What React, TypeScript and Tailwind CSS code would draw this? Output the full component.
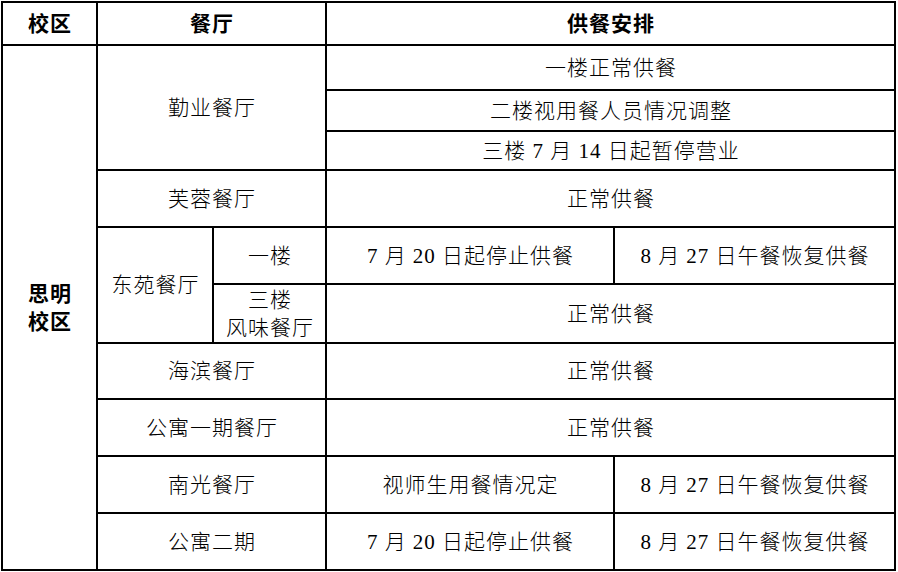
import React from "react";

const font = {
  fontFamily: '"Liberation Serif", "Noto Sans CJK SC", serif',
};

function Cell({
  className = "",
  children,
}: {
  className?: string;
  children: React.ReactNode;
}) {
  return (
    <div
      className={`bg-white flex items-center justify-center text-center text-[21px] tracking-[1px] pl-px leading-[28px] text-black font-light ${className}`}
    >
      {children}
    </div>
  );
}

export default function App() {
  return (
    <div className="w-[898px] h-[572px] bg-white" style={font}>
      <div
        className="ml-px mt-px inline-grid bg-black p-[2px] gap-[2px] grid-cols-[93px_114px_111px_286px_279px] grid-rows-[41px_43px_39px_37px_55px_55px_57px_54px_55px_55px_55px]"
      >
        {/* header */}
        <Cell className="col-start-1 row-start-1 !font-bold">校区</Cell>
        <Cell className="col-start-2 col-span-2 row-start-1 !font-bold">餐厅</Cell>
        <Cell className="col-start-4 col-span-2 row-start-1 !font-bold">供餐安排</Cell>

        {/* campus */}
        <Cell className="col-start-1 row-start-2 row-span-10 !font-bold">
          思明
          <br />
          校区
        </Cell>

        {/* 勤业 */}
        <Cell className="col-start-2 col-span-2 row-start-2 row-span-3">勤业餐厅</Cell>
        <Cell className="col-start-4 col-span-2 row-start-2">一楼正常供餐</Cell>
        <Cell className="col-start-4 col-span-2 row-start-3">二楼视用餐人员情况调整</Cell>
        <Cell className="col-start-4 col-span-2 row-start-4">三楼 7 月 14 日起暂停营业</Cell>

        {/* 芙蓉 */}
        <Cell className="col-start-2 col-span-2 row-start-5">芙蓉餐厅</Cell>
        <Cell className="col-start-4 col-span-2 row-start-5">正常供餐</Cell>

        {/* 东苑 */}
        <Cell className="col-start-2 row-start-6 row-span-2">东苑餐厅</Cell>
        <Cell className="col-start-3 row-start-6">一楼</Cell>
        <Cell className="col-start-4 row-start-6">7 月 20 日起停止供餐</Cell>
        <Cell className="col-start-5 row-start-6">8 月 27 日午餐恢复供餐</Cell>
        <Cell className="col-start-3 row-start-7">
          三楼
          <br />
          风味餐厅
        </Cell>
        <Cell className="col-start-4 col-span-2 row-start-7">正常供餐</Cell>

        {/* 海滨 */}
        <Cell className="col-start-2 col-span-2 row-start-8">海滨餐厅</Cell>
        <Cell className="col-start-4 col-span-2 row-start-8">正常供餐</Cell>

        {/* 公寓一期 */}
        <Cell className="col-start-2 col-span-2 row-start-9">公寓一期餐厅</Cell>
        <Cell className="col-start-4 col-span-2 row-start-9">正常供餐</Cell>

        {/* 南光 */}
        <Cell className="col-start-2 col-span-2 row-start-10">南光餐厅</Cell>
        <Cell className="col-start-4 row-start-10">视师生用餐情况定</Cell>
        <Cell className="col-start-5 row-start-10">8 月 27 日午餐恢复供餐</Cell>

        {/* 公寓二期 */}
        <Cell className="col-start-2 col-span-2 row-start-11">公寓二期</Cell>
        <Cell className="col-start-4 row-start-11">7 月 20 日起停止供餐</Cell>
        <Cell className="col-start-5 row-start-11">8 月 27 日午餐恢复供餐</Cell>
      </div>
    </div>
  );
}
